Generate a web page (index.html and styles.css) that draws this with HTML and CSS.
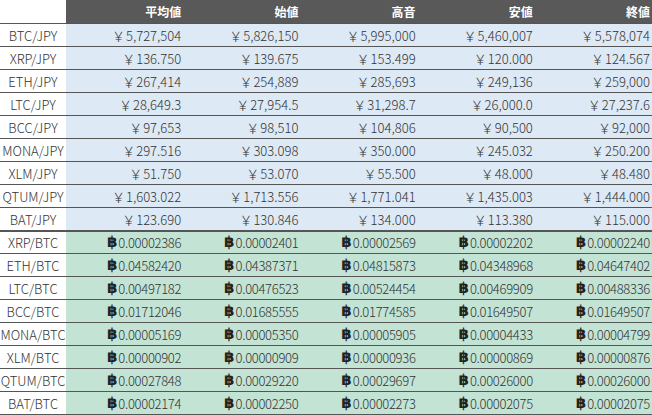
FILE: index.html
```html
<!DOCTYPE html>
<html lang="ja">
<head>
<meta charset="utf-8">
<link rel="stylesheet" href="styles.css">
</head>
<body>
<div class="rates">
  <div class="row head">
    <div class="cell pair"></div>
    <div class="cell">平均値</div><div class="cell">始値</div><div class="cell">高音</div><div class="cell">安値</div><div class="cell">終値</div>
  </div>
  <div class="row jpy"><div class="cell pair">BTC/JPY</div><div class="cell"><span class="yen">￥</span>5,727,504</div><div class="cell"><span class="yen">￥</span>5,826,150</div><div class="cell"><span class="yen">￥</span>5,995,000</div><div class="cell"><span class="yen">￥</span>5,460,007</div><div class="cell"><span class="yen">￥</span>5,578,074</div></div>
  <div class="row jpy"><div class="cell pair">XRP/JPY</div><div class="cell"><span class="yen">￥</span>136.750</div><div class="cell"><span class="yen">￥</span>139.675</div><div class="cell"><span class="yen">￥</span>153.499</div><div class="cell"><span class="yen">￥</span>120.000</div><div class="cell"><span class="yen">￥</span>124.567</div></div>
  <div class="row jpy"><div class="cell pair">ETH/JPY</div><div class="cell"><span class="yen">￥</span>267,414</div><div class="cell"><span class="yen">￥</span>254,889</div><div class="cell"><span class="yen">￥</span>285,693</div><div class="cell"><span class="yen">￥</span>249,136</div><div class="cell"><span class="yen">￥</span>259,000</div></div>
  <div class="row jpy"><div class="cell pair">LTC/JPY</div><div class="cell"><span class="yen">￥</span>28,649.3</div><div class="cell"><span class="yen">￥</span>27,954.5</div><div class="cell"><span class="yen">￥</span>31,298.7</div><div class="cell"><span class="yen">￥</span>26,000.0</div><div class="cell"><span class="yen">￥</span>27,237.6</div></div>
  <div class="row jpy"><div class="cell pair">BCC/JPY</div><div class="cell"><span class="yen">￥</span>97,653</div><div class="cell"><span class="yen">￥</span>98,510</div><div class="cell"><span class="yen">￥</span>104,806</div><div class="cell"><span class="yen">￥</span>90,500</div><div class="cell"><span class="yen">￥</span>92,000</div></div>
  <div class="row jpy"><div class="cell pair">MONA/JPY</div><div class="cell"><span class="yen">￥</span>297.516</div><div class="cell"><span class="yen">￥</span>303.098</div><div class="cell"><span class="yen">￥</span>350.000</div><div class="cell"><span class="yen">￥</span>245.032</div><div class="cell"><span class="yen">￥</span>250.200</div></div>
  <div class="row jpy"><div class="cell pair">XLM/JPY</div><div class="cell"><span class="yen">￥</span>51.750</div><div class="cell"><span class="yen">￥</span>53.070</div><div class="cell"><span class="yen">￥</span>55.500</div><div class="cell"><span class="yen">￥</span>48.000</div><div class="cell"><span class="yen">￥</span>48.480</div></div>
  <div class="row jpy"><div class="cell pair">QTUM/JPY</div><div class="cell"><span class="yen">￥</span>1,603.022</div><div class="cell"><span class="yen">￥</span>1,713.556</div><div class="cell"><span class="yen">￥</span>1,771.041</div><div class="cell"><span class="yen">￥</span>1,435.003</div><div class="cell"><span class="yen">￥</span>1,444.000</div></div>
  <div class="row jpy"><div class="cell pair">BAT/JPY</div><div class="cell"><span class="yen">￥</span>123.690</div><div class="cell"><span class="yen">￥</span>130.846</div><div class="cell"><span class="yen">￥</span>134.000</div><div class="cell"><span class="yen">￥</span>113.380</div><div class="cell"><span class="yen">￥</span>115.000</div></div>
  <div class="row btc first"><div class="cell pair">XRP/BTC</div><div class="cell"><b class="b">฿</b>0.00002386</div><div class="cell"><b class="b">฿</b>0.00002401</div><div class="cell"><b class="b">฿</b>0.00002569</div><div class="cell"><b class="b">฿</b>0.00002202</div><div class="cell"><b class="b">฿</b>0.00002240</div></div>
  <div class="row btc"><div class="cell pair">ETH/BTC</div><div class="cell"><b class="b">฿</b>0.04582420</div><div class="cell"><b class="b">฿</b>0.04387371</div><div class="cell"><b class="b">฿</b>0.04815873</div><div class="cell"><b class="b">฿</b>0.04348968</div><div class="cell"><b class="b">฿</b>0.04647402</div></div>
  <div class="row btc"><div class="cell pair">LTC/BTC</div><div class="cell"><b class="b">฿</b>0.00497182</div><div class="cell"><b class="b">฿</b>0.00476523</div><div class="cell"><b class="b">฿</b>0.00524454</div><div class="cell"><b class="b">฿</b>0.00469909</div><div class="cell"><b class="b">฿</b>0.00488336</div></div>
  <div class="row btc"><div class="cell pair">BCC/BTC</div><div class="cell"><b class="b">฿</b>0.01712046</div><div class="cell"><b class="b">฿</b>0.01685555</div><div class="cell"><b class="b">฿</b>0.01774585</div><div class="cell"><b class="b">฿</b>0.01649507</div><div class="cell"><b class="b">฿</b>0.01649507</div></div>
  <div class="row btc"><div class="cell pair">MONA/BTC</div><div class="cell"><b class="b">฿</b>0.00005169</div><div class="cell"><b class="b">฿</b>0.00005350</div><div class="cell"><b class="b">฿</b>0.00005905</div><div class="cell"><b class="b">฿</b>0.00004433</div><div class="cell"><b class="b">฿</b>0.00004799</div></div>
  <div class="row btc"><div class="cell pair">XLM/BTC</div><div class="cell"><b class="b">฿</b>0.00000902</div><div class="cell"><b class="b">฿</b>0.00000909</div><div class="cell"><b class="b">฿</b>0.00000936</div><div class="cell"><b class="b">฿</b>0.00000869</div><div class="cell"><b class="b">฿</b>0.00000876</div></div>
  <div class="row btc"><div class="cell pair">QTUM/BTC</div><div class="cell"><b class="b">฿</b>0.00027848</div><div class="cell"><b class="b">฿</b>0.00029220</div><div class="cell"><b class="b">฿</b>0.00029697</div><div class="cell"><b class="b">฿</b>0.00026000</div><div class="cell"><b class="b">฿</b>0.00026000</div></div>
  <div class="row btc last"><div class="cell pair">BAT/BTC</div><div class="cell"><b class="b">฿</b>0.00002174</div><div class="cell"><b class="b">฿</b>0.00002250</div><div class="cell"><b class="b">฿</b>0.00002273</div><div class="cell"><b class="b">฿</b>0.00002075</div><div class="cell"><b class="b">฿</b>0.00002075</div></div>
</div>
</body>
</html>
```
FILE: styles.css
```css
html, body {
  margin: 0;
  padding: 0;
  background: #ffffff;
}

.rates {
  width: 652px;
  font-family: "Noto Sans CJK JP", "Noto Sans", sans-serif;
  font-size: 13px;
  font-weight: 300;
  color: #333333;
}

.row {
  display: grid;
  grid-template-columns: 66px repeat(5, 1fr);
  height: 22px;
  border-top: 1px solid #555555;
}

.row.head {
  height: 23px;
  border-top: none;
}

.row.first {
  border-top-width: 2px;
  height: 21px;
}

.row.last {
  border-bottom: 1px solid #555555;
}

.cell {
  display: flex;
  align-items: center;
  justify-content: flex-end;
  padding-right: 2px;
  white-space: nowrap;
  overflow: hidden;
  line-height: 1;
}

.head .cell {
  background: #595959;
  color: #ffffff;
  font-weight: 700;
  font-size: 12px;
}

.cell.pair {
  justify-content: center;
  padding-right: 0;
  background: #ffffff;
}

.jpy .cell {
  background: #dde9f5;
}

.btc .cell {
  background: #c3e3d5;
  letter-spacing: -0.3px;
}

.btc .cell.pair {
  letter-spacing: 0;
}

.jpy .cell.pair,
.btc .cell.pair,
.head .cell.pair {
  background: #ffffff;
}

.yen {
  margin-right: 1px;
}

.b {
  font-family: "DejaVu Sans", sans-serif;
  font-weight: 700;
  font-size: 15px;
  color: #222222;
  letter-spacing: 0;
  margin-right: 1px;
}
```
